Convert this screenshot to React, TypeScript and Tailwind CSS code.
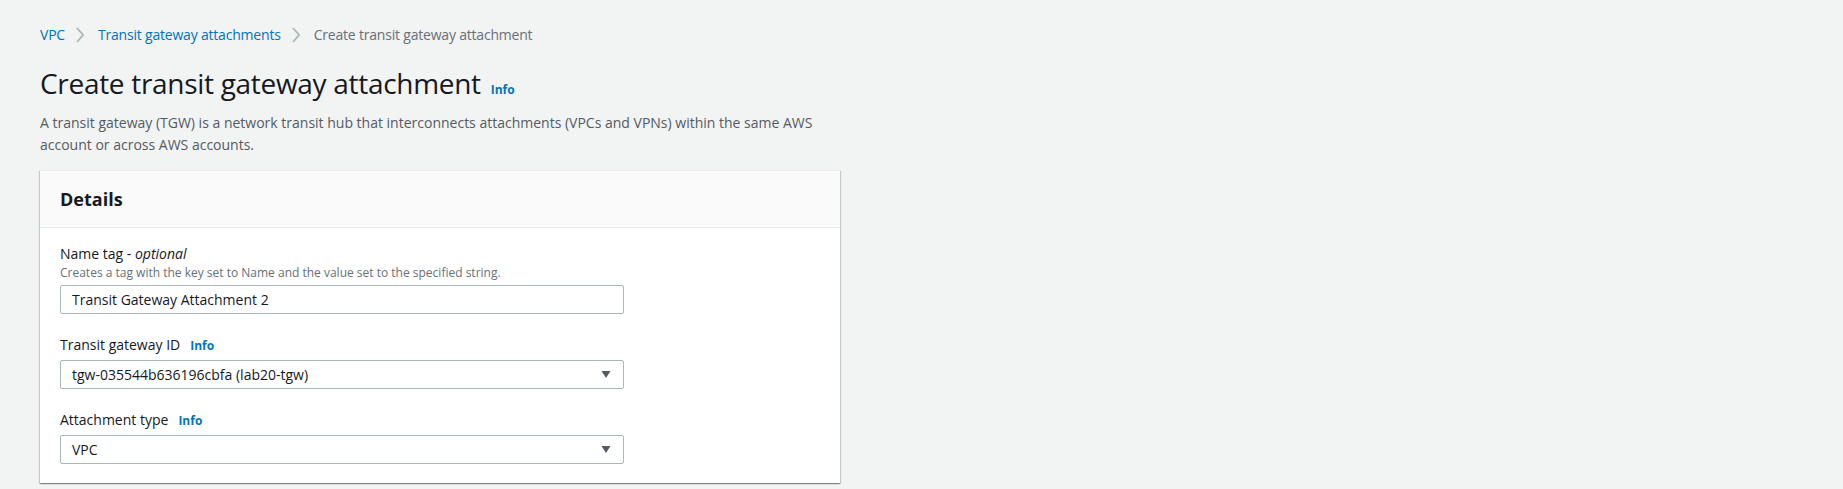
const font = { fontFamily: '"Open Sans", "Noto Sans", sans-serif' };

function Info() {
  return <span className="ml-[10px] text-[12px] font-bold text-[#0073bb] leading-[16px]">Info</span>;
}

function Chevron() {
  return (
    <svg className="ml-[11px] mr-[14px]" width="8" height="16" viewBox="0 0 8 16">
      <polyline points="1,1 7,8 1,15" fill="none" stroke="#aab7b8" strokeWidth="1.8" />
    </svg>
  );
}

function SelectBox({ value }: { value: string }) {
  return (
    <div className="mt-1 flex h-[29px] w-[564px] items-center justify-between rounded-[2px] border border-[#aab7b8] bg-white pl-[11px] pr-[12px] text-[14px] text-[#16191f]">
      <span>{value}</span>
      <svg width="10" height="7" viewBox="0 0 10 7">
        <polygon points="0.5,0 9.5,0 5,7" fill="#545b64" />
      </svg>
    </div>
  );
}

export default function App() {
  return (
    <div className="min-h-[489px] w-full bg-[#f2f3f3] px-[40px] pt-[24px]" style={font}>
      {/* Breadcrumbs */}
      <nav className="flex items-center text-[14px] leading-[22px] tracking-[-0.2px]">
        <span className="text-[#0073bb]">VPC</span>
        <Chevron />
        <span className="text-[#0073bb]">Transit gateway attachments</span>
        <Chevron />
        <span className="text-[#687078]">Create transit gateway attachment</span>
      </nav>

      {/* Header */}
      <div className="mt-[17px] flex items-baseline">
        <h1 className="text-[28px] font-normal leading-[40px] tracking-[-0.3px] text-[#16191f]">
          Create transit gateway attachment
        </h1>
        <Info />
      </div>
      <p className="mt-[9px] max-w-[780px] text-[14px] leading-[22px] text-[#545b64]">
        A transit gateway (TGW) is a network transit hub that interconnects attachments (VPCs and VPNs) within the same AWS account or across AWS accounts.
      </p>

      {/* Details container */}
      <div className="mt-[14px] w-[800px] border-t border-[#eaeded] bg-white shadow-[0_1px_1px_0_rgba(0,28,36,0.3),1px_1px_1px_0_rgba(0,28,36,0.15),-1px_1px_1px_0_rgba(0,28,36,0.15)]">
        <div className="border-b border-[#eaeded] bg-[#fafafa] px-[20px] pt-[17px] pb-[17px]">
          <h2 className="text-[18px] font-bold leading-[22px] text-[#16191f]">Details</h2>
        </div>
        <div className="px-[20px] pt-[15px] pb-[19px]">
          <div>
            <div className="text-[14px] leading-[22px] text-[#16191f]">
              Name tag - <i>optional</i>
            </div>
            <div className="text-[12px] leading-[16px] text-[#687078]">
              Creates a tag with the key set to Name and the value set to the specified string.
            </div>
            <input
              readOnly
              value="Transit Gateway Attachment 2"
              className="mt-1 block h-[29px] w-[564px] rounded-[2px] border border-[#aab7b8] bg-white px-[11px] text-[14px] text-[#16191f] outline-none"
            />
          </div>

          <div className="mt-[20px]">
            <div className="flex items-baseline text-[14px] leading-[22px] text-[#16191f]">
              Transit gateway ID
              <Info />
            </div>
            <SelectBox value="tgw-035544b636196cbfa (lab20-tgw)" />
          </div>

          <div className="mt-[20px]">
            <div className="flex items-baseline text-[14px] leading-[22px] text-[#16191f]">
              Attachment type
              <Info />
            </div>
            <SelectBox value="VPC" />
          </div>
        </div>
      </div>
    </div>
  );
}
